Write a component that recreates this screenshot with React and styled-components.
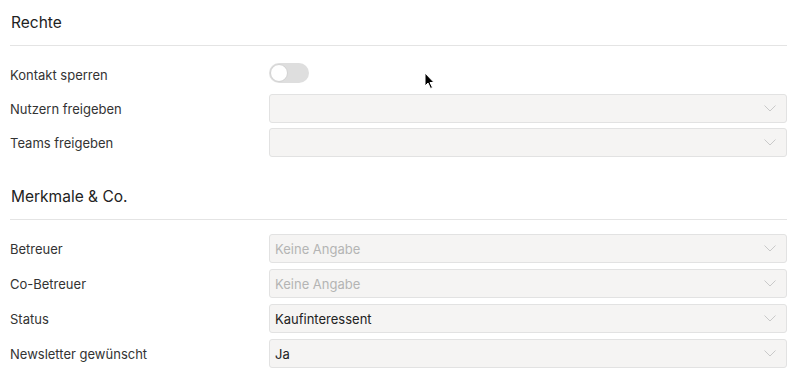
import styled, { createGlobalStyle } from 'styled-components'

const GlobalStyle = createGlobalStyle`
  body {
    margin: 0;
    background: #fff;
    font-family: Inter, "Noto Sans", sans-serif;
    color: #333;
  }
`

const rechte = [
  { label: 'Kontakt sperren', type: 'toggle' },
  { label: 'Nutzern freigeben', type: 'select' },
  { label: 'Teams freigeben', type: 'select' },
]

const merkmale = [
  { label: 'Betreuer', type: 'select', value: 'Keine Angabe', placeholder: true },
  { label: 'Co-Betreuer', type: 'select', value: 'Keine Angabe', placeholder: true },
  { label: 'Status', type: 'select', value: 'Kaufinteressent' },
  { label: 'Newsletter gewünscht', type: 'select', value: 'Ja' },
]

function Chevron() {
  return (
    <svg width="12" height="7" viewBox="0 0 12 7" fill="none">
      <path d="M0.5 0.5 L6 6 L11.5 0.5" stroke="#c9c9c9" strokeWidth="1" />
    </svg>
  )
}

function Field({ item }) {
  if (item.type === 'toggle') {
    return (
      <Toggle>
        <Knob />
      </Toggle>
    )
  }
  return (
    <Select>
      <SelectValue $placeholder={item.placeholder}>{item.value}</SelectValue>
      <Chevron />
    </Select>
  )
}

function Section({ title, items, gap, top }) {
  return (
    <Block $top={top}>
      <Heading>{title}</Heading>
      <Rows $gap={gap}>
        {items.map((item) => (
          <Row key={item.label}>
            <Label>{item.label}</Label>
            <Field item={item} />
          </Row>
        ))}
      </Rows>
    </Block>
  )
}

export default function App() {
  return (
    <Page>
      <GlobalStyle />
      <Section title="Rechte" items={rechte} gap={5} top={13} />
      <Section title="Merkmale & Co." items={merkmale} gap={6} top={30} />
      <Cursor>
        <svg width="12" height="18" viewBox="0 0 12 18">
          <path d="M1 1 L1 14 L4 11 L6.5 16.5 L8.5 15.5 L6 10.5 L10 10.5 Z" fill="#000" stroke="#fff" strokeWidth="1" />
        </svg>
      </Cursor>
    </Page>
  )
}

const Page = styled.div`
  position: relative;
  width: 800px;
  height: 373px;
  box-sizing: border-box;
  padding: 0 13px 0 10px;
  overflow: hidden;
`

const Block = styled.section`
  padding-top: ${(p) => p.$top}px;
`

const Heading = styled.div`
  font-size: 15.5px;
  line-height: 20px;
  color: #222;
  padding: 0 0 12px 1px;
  border-bottom: 1px solid #e4e4e4;
`

const Rows = styled.div`
  display: flex;
  flex-direction: column;
  gap: ${(p) => p.$gap}px;
  padding-top: 14px;
`

const Row = styled.div`
  display: grid;
  grid-template-columns: 259px 1fr;
  align-items: center;
  height: 29px;
`

const Label = styled.div`
  font-size: 13px;
  color: #333;
`

const Toggle = styled.div`
  width: 40px;
  height: 20px;
  border-radius: 10px;
  background: #dedede;
  display: flex;
  align-items: center;
  margin-top: -3px;
`

const Knob = styled.div`
  width: 18px;
  height: 18px;
  border-radius: 50%;
  background: #fff;
  border: 1px solid #d2d2d2;
  box-sizing: border-box;
  margin-left: 1px;
`

const Select = styled.div`
  height: 29px;
  box-sizing: border-box;
  border: 1px solid #e2e2e2;
  border-radius: 3px;
  background: #f5f4f3;
  display: flex;
  align-items: center;
  justify-content: space-between;
  padding: 0 10px 0 5px;
`

const SelectValue = styled.span`
  font-size: 13px;
  color: ${(p) => (p.$placeholder ? '#b4b4b4' : '#222')};
`

const Cursor = styled.div`
  position: absolute;
  left: 424px;
  top: 72px;
  line-height: 0;
`
